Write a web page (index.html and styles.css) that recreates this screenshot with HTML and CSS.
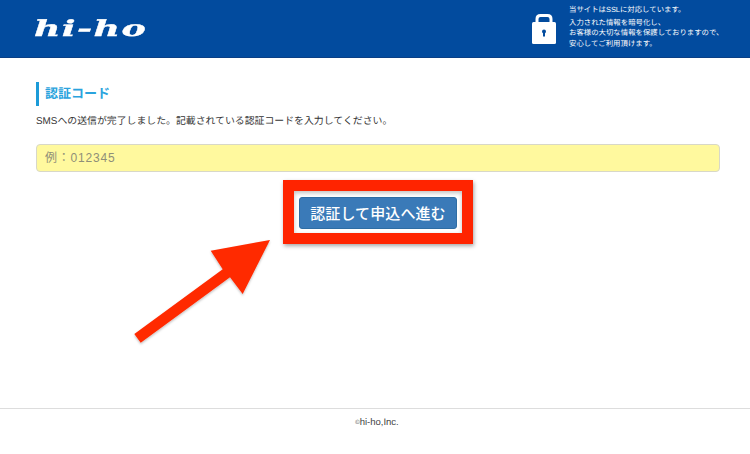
FILE: index.html
```html
<!DOCTYPE html>
<html lang="ja">
<head>
    <meta charset="UTF-8">
    <title>認証コード</title>
    <link rel="stylesheet" href="styles.css">
</head>
<body>
    <header class="site-header">
        <div class="logo">hi-ho</div>
        <div class="ssl">
            <svg class="lock" width="24" height="30" viewBox="0 0 24 30">
                <path d="M5 11V5C5 3 6.200 1.500 8.500 1.500h7C17.800 1.500 19 3 19 5v6" fill="none" stroke="#fff" stroke-width="3"/>
                <rect x="0" y="8" width="24" height="22" rx="1.500" fill="#fff"/>
                <circle cx="12" cy="17.500" r="2" fill="#024b9e"/>
                <rect x="11" y="18" width="2" height="4.500" fill="#024b9e"/>
            </svg>
            <div class="ssl-text">
                <p class="ssl-first">当サイトはSSLに対応しています。</p>
                <p>入力された情報を暗号化し、</p>
                <p>お客様の大切な情報を保護しておりますので、</p>
                <p>安心してご利用頂けます。</p>
            </div>
        </div>
    </header>

    <main class="content">
        <h2 class="section-title">認証コード</h2>
        <p class="lead">SMSへの送信が完了しました。記載されている認証コードを入力してください。</p>
        <input class="code-input" type="text" placeholder="例：012345">
        <div class="btn-row">
            <div class="red-frame">
                <button class="submit-btn" type="button">認証して申込へ進む</button>
            </div>
        </div>
        <svg class="arrow" width="170" height="120" viewBox="0 0 170 120">
            <defs>
                <filter id="arrow-shadow" x="-10%" y="-10%" width="120%" height="120%">
                    <feDropShadow dx="0" dy="1.500" stdDeviation="1" flood-color="#000" flood-opacity="0.250"/>
                </filter>
            </defs>
            <polygon points="14.300,104 102.700,39.300 90.700,20.700 150,10 122.700,64 110,47.300 20.700,112.700" fill="#ff2a00" filter="url(#arrow-shadow)"/>
        </svg>
    </main>

    <footer class="site-footer"><span class="copy">©</span>hi-ho,Inc.</footer>
</body>
</html>
```

FILE: styles.css
```css
* {
    box-sizing: border-box;
}
html, body {
    height: 100%;
}
body {
    margin: 0;
    display: flex;
    flex-direction: column;
    background: #fff;
    color: #333;
    font-family: "Liberation Sans", "Noto Sans CJK JP", sans-serif;
    text-rendering: geometricPrecision;
    overflow: hidden;
}
.site-header {
    height: 58px;
    flex-shrink: 0;
    display: flex;
    justify-content: space-between;
    align-items: center;
    padding: 0 0 0 34px;
    background: #024b9e;
    border-bottom: 1px solid #0a3f85;
}
.logo {
    color: #fff;
    font-family: "DejaVu Serif", serif;
    font-weight: bold;
    font-style: italic;
    font-size: 26px;
    line-height: 1;
    letter-spacing: 1px;
    -webkit-text-stroke: 0.4px #fff;
    transform: scale(1.4, 0.85);
    transform-origin: left center;
}
.ssl {
    display: flex;
    align-items: center;
    gap: 13px;
    width: 218px;
    color: #fff;
}
.lock {
    flex-shrink: 0;
    margin-top: 1px;
}
.ssl-text {
    font-size: 7.400px;
    line-height: 10.500px;
    white-space: nowrap;
    margin-top: -3px;
}
.ssl-text p {
    margin: 0;
}
.ssl-text .ssl-first {
    margin-bottom: 2px;
}
.content {
    position: relative;
    flex: 1;
    padding: 24px 30px 0 36px;
}
.section-title {
    margin: 0 0 8px;
    padding-left: 6px;
    height: 24px;
    line-height: 24px;
    border-left: 3px solid #1c9bd8;
    color: #2aa3dd;
    font-size: 13px;
    font-weight: bold;
}
.lead {
    margin: 0 0 14px;
    font-size: 9.900px;
    line-height: 16px;
}
.code-input {
    display: block;
    width: 100%;
    height: 28px;
    padding: 0 8px;
    background: #fff99e;
    border: 1px solid #d8d8c8;
    border-radius: 4px;
    font-family: inherit;
    font-size: 12px;
    letter-spacing: 0.800px;
}
.code-input::placeholder {
    color: #8f8f78;
}
.btn-row {
    display: flex;
    justify-content: center;
    margin-top: 8px;
}
.red-frame {
    width: 190px;
    height: 64px;
    display: flex;
    align-items: center;
    justify-content: center;
    padding-top: 1px;
    border: 11px solid #ff2400;
    box-shadow: 1px 2px 4px rgba(0, 0, 0, 0.35), inset 0 2px 4px rgba(0, 0, 0, 0.25);
}
.submit-btn {
    width: 158px;
    height: 32px;
    padding: 0;
    background: #3a7ab8;
    border: 1px solid #2e6da4;
    border-radius: 3px;
    color: #fff;
    font-family: inherit;
    font-size: 15px;
    font-weight: 500;
    letter-spacing: 0.100px;
    flex-shrink: 0;
}
.arrow {
    position: absolute;
    left: 120px;
    top: 172px;
}
.site-footer {
    height: 46px;
    flex-shrink: 0;
    border-top: 1px solid #ddd;
    padding: 8px 0 0 4px;
    text-align: center;
    font-size: 9.500px;
    line-height: 12px;
    color: #444;
}
.copy {
    font-size: 6px;
    vertical-align: 1px;
}
```
